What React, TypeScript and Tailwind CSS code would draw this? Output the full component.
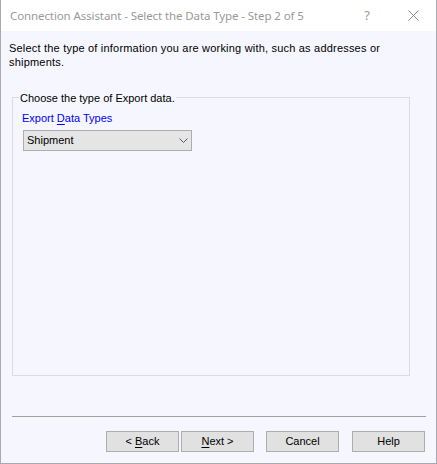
import React from "react";

const UI = "font-['Liberation_Sans',Arial,sans-serif] text-[11px] leading-[13px] text-black";

function WizButton({ children }: { children: React.ReactNode }) {
  return (
    <button
      type="button"
      className={`w-[73px] h-[21px] shrink-0 border border-[#adadad] bg-[#e1e1e1] flex items-center justify-center ${UI}`}
    >
      {children}
    </button>
  );
}

export default function App() {
  return (
    <div className="w-[437px] h-[464px] flex flex-col border-x border-b border-[#a9a9b0] bg-[#f6f7fe] overflow-hidden">
      {/* caption */}
      <div className="h-[31px] shrink-0 bg-white flex items-center">
        <div className="pl-[9px] font-['Noto_Sans',sans-serif] text-[11.5px] tracking-[-0.1px] text-[#999999] whitespace-nowrap">
          Connection Assistant - Select the Data Type - Step 2 of 5
        </div>
        <div className="ml-auto flex h-full">
          <div className="w-[46px] flex items-center justify-center font-['Noto_Sans',sans-serif] text-[13px] text-[#9a9a9a]">
            ?
          </div>
          <div className="w-[46px] flex items-center justify-center">
            <svg width="11" height="11" viewBox="0 0 11 11">
              <path d="M0.5 0.5 L10.5 10.5 M10.5 0.5 L0.5 10.5" stroke="#8a8a8a" strokeWidth="1" fill="none" />
            </svg>
          </div>
        </div>
      </div>

      {/* body */}
      <div className={`flex-1 flex flex-col ${UI}`}>
        <p className="pl-[8px] pt-[10px] pr-[10px] leading-[14px] tracking-[0.2px] whitespace-nowrap">
          Select the type of information you are working with, such as addresses or
          <br />
          shipments.
        </p>

        <div className="relative ml-[11px] mt-[28px] w-[398px] h-[279px] shrink-0 border border-[#dcdcdc]">
          <span className="absolute left-[6px] top-[-6px] px-[1px] bg-[#f6f7fe]">
            Choose the type of Export data.
          </span>
          <div className="pt-[14px] pl-[9px] flex flex-col items-start">
            <div className="text-[#0000ff]">
              Export <span className="underline underline-offset-2">D</span>ata Types
            </div>
            <div className="mt-[5px] ml-[1px] w-[169px] h-[21px] border border-[#adadad] bg-[#e5e5e5] flex items-center pl-[3px] pr-[3px]">
              <span>Shipment</span>
              <svg className="ml-auto" width="9" height="5" viewBox="0 0 9 5">
                <path d="M0.5 0.5 L4.5 4.5 L8.5 0.5" stroke="#5a5a5a" strokeWidth="1" fill="none" />
              </svg>
            </div>
          </div>
        </div>

        <div className="ml-[11px] mt-[40px] w-[414px] h-px shrink-0 bg-[#a0a0a0]" />

        <div className="mt-[14px] ml-[105px] flex">
          <WizButton>
            &lt;&nbsp;<span className="underline underline-offset-2">B</span>ack
          </WizButton>
          <div className="ml-[2px]">
            <WizButton>
              <span className="underline underline-offset-2">N</span>ext&nbsp;&gt;
            </WizButton>
          </div>
          <div className="ml-[12px]">
            <WizButton>Cancel</WizButton>
          </div>
          <div className="ml-[13px]">
            <WizButton>Help</WizButton>
          </div>
        </div>
      </div>
    </div>
  );
}
